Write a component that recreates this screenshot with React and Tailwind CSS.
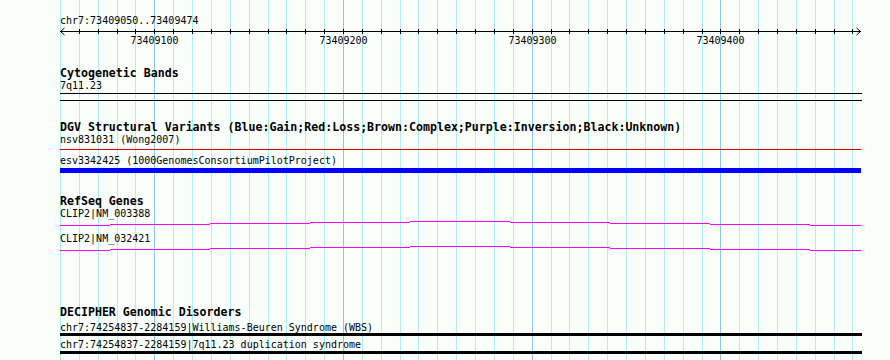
const SCALE = 800 / 424;
const gridX = Array.from({ length: 43 }, (_, k) => Math.round(60 + k * 10 * SCALE));
const majors = { 5: '73409100', 15: '73409200', 25: '73409300', 35: '73409400' };

// step profile of the transcript line (x breakpoints, y offset inside its strip)
const GENE_X = [60, 110, 210, 310, 410, 510, 610, 710, 810, 861];
const GENE_Y = [6, 5, 4, 3, 2, 3, 4, 5, 6];

function Grid() {
  return (
    <svg className="absolute inset-0" width="890" height="360">
      {gridX.map((x, k) => (
        <line
          key={k}
          x1={x + 0.5}
          x2={x + 0.5}
          y1="0"
          y2="360"
          stroke={majors[k] ? '#8cc6e6' : '#afeeee'}
          strokeWidth="1"
        />
      ))}
    </svg>
  );
}

function Ruler() {
  return (
    <svg width="890" height="21" className="block">
      <line x1="60" x2="861" y1="4.5" y2="4.5" stroke="#000" />
      {gridX.map((x, k) =>
        k > 0 ? <line key={k} x1={x + 0.5} x2={x + 0.5} y1="2" y2="7" stroke="#000" /> : null
      )}
      <polyline points="64.5,1 60.5,4.5 64.5,8" fill="none" stroke="#000" />
      <polyline points="856.5,1 860.5,4.5 856.5,8" fill="none" stroke="#000" />
      {Object.entries(majors).map(([k, label]) => (
        <text
          key={k}
          x={gridX[k] + 0.5}
          y="17"
          textAnchor="middle"
          fontSize="10"
          fontFamily="DejaVu Sans Mono, monospace"
          fill="#000"
        >
          {label}
        </text>
      ))}
    </svg>
  );
}

function GeneLine({ height }) {
  return (
    <svg width="890" height={height} className="block">
      {GENE_Y.map((y, i) => (
        <rect key={i} x={GENE_X[i]} y={y} width={GENE_X[i + 1] - GENE_X[i]} height="1" fill="#ff00ff" />
      ))}
    </svg>
  );
}

const Header = ({ className = '', children }) => (
  <div className={`pl-[60px] text-[11.6px] leading-[13px] font-bold whitespace-pre ${className}`}>{children}</div>
);

const Row = ({ className = '', children }) => (
  <div className={`pl-[60px] text-[10px] leading-[11px] whitespace-pre ${className}`}>{children}</div>
);

export default function App() {
  return (
    <div className="relative w-[890px] h-[360px] overflow-hidden bg-[#fafefa] text-black font-['DejaVu_Sans_Mono','Liberation_Mono',monospace]">
      <Grid />
      <div className="relative">
        <div className="pt-[15px] pl-[60px] text-[10px] leading-[12px]">chr7:73409050..73409474</div>
        <Ruler />

        {/* Cytogenetic Bands */}
        <Header className="mt-[19px]">Cytogenetic Bands</Header>
        <Row>7q11.23</Row>
        <div className="ml-[60px] mt-[2px] h-[8px] w-[802px] border-y border-black" />

        {/* DGV */}
        <Header className="mt-[20px]">DGV Structural Variants (Blue:Gain;Red:Loss;Brown:Complex;Purple:Inversion;Black:Unknown)</Header>
        <Row>nsv831031 (Wong2007)</Row>
        <div className="ml-[60px] mt-[4px] h-px w-[801px] bg-[#e00000]" />
        <Row className="mt-[5px]">esv3342425 (1000GenomesConsortiumPilotProject)</Row>
        <div className="ml-[60px] mt-[2px] h-[5px] w-[801px] bg-[#0000ff]" />

        {/* RefSeq */}
        <Header className="mt-[22px]">RefSeq Genes</Header>
        <Row>CLIP2|NM_003388</Row>
        <GeneLine height={14} />
        <Row>CLIP2|NM_032421</Row>
        <GeneLine height={8} />

        {/* DECIPHER */}
        <Header className="mt-[54px]">DECIPHER Genomic Disorders</Header>
        <Row className="mt-[3px]">chr7:74254837-2284159|Williams-Beuren Syndrome (WBS)</Row>
        <div className="ml-[60px] h-[3px] w-[802px] bg-black" />
        <Row className="mt-[3px]">chr7:74254837-2284159|7q11.23 duplication syndrome</Row>
        <div className="ml-[60px] mt-px h-[3px] w-[802px] bg-black" />
      </div>
    </div>
  );
}
